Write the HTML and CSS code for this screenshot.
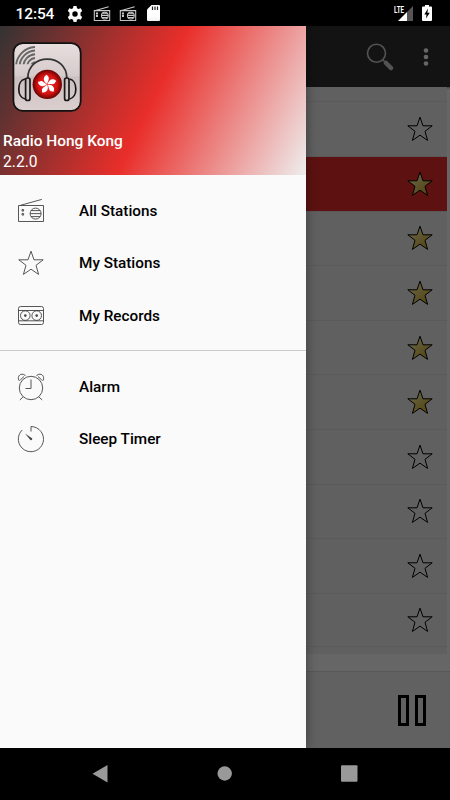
FILE: index.html
```html
<!DOCTYPE html>
<html lang="en">
<head>
    <meta charset="utf-8">
    <title>Radio Hong Kong</title>
    <meta name="viewport" content="width=device-width, initial-scale=1.0">
    <link rel="stylesheet" href="styles.css">
</head>
<body>
<!-- shared icons -->
<svg class="defs">
    <linearGradient id="gold" x1="0" y1="0" x2="1" y2="1"><stop offset=".25" stop-color="#fff0a0"/><stop offset=".75" stop-color="#d8b83c"/></linearGradient>
    <symbol id="star" viewBox="0 0 26 26">
        <path d="M13 1.2L16 9.8H25.2L18 15.3L20.6 24.4L13 19.2L5.4 24.4L8 15.3L.8 9.8H10Z"/>
    </symbol>
    <symbol id="radio" viewBox="0 0 28 26">
        <path d="M1.5 7.5H26.5V23.5H1.5ZM3.5 7.3L24.8 1.4"/>
        <circle cx="18.6" cy="15.6" r="5.5"/>
        <path d="M14 12.6H23.2M13.2 15.6H24M14 18.6H23.2"/>
        <path class="dots" d="M5 11.5h1.6v1.6H5zM5 15.5h1.6v1.6H5z"/>
    </symbol>
</svg>
<div class="phone">
    <div class="status">
        <span class="time">12:54</span>
        <svg class="gear" viewBox="0 0 16 16"><path d="M6.5 0h3l.5 2.3 1.4.8 2.3-.8 1.5 2.6-1.7 1.7v2.8l1.7 1.7-1.5 2.6-2.3-.8-1.4.8-.5 2.3h-3L6 13.7l-1.4-.8-2.3.8L.8 11.1l1.7-1.7V6.6L.8 4.9l1.5-2.6 2.3.8L6 2.3zM8 5.3a2.7 2.7 0 1 0 0 5.4 2.7 2.7 0 1 0 0-5.4z"/></svg>
        <svg class="s-radio"><use href="#radio"/></svg>
        <svg class="s-radio second"><use href="#radio"/></svg>
        <svg class="sd" viewBox="0 0 13 16"><path fill="#fff" d="M4.5 0H12a1 1 0 0 1 1 1v14a1 1 0 0 1-1 1H1a1 1 0 0 1-1-1V4.5z"/><path stroke="#222" stroke-width="1.2" d="M5.5 1.5v3.5M8 1.5v3.5M10.5 1.5v3.5"/></svg>
        <svg class="signal" viewBox="0 0 20 16"><path fill="#555" d="M19 1v15h-6V7z"/><path fill="#fff" d="M13 7v9H4z"/><text x="0" y="7.8" textLength="10" lengthAdjust="spacingAndGlyphs">LTE</text></svg>
        <svg class="battery" viewBox="0 0 10 16"><path fill="#fff" d="M3 0h4v1.5h2a1 1 0 0 1 1 1V15a1 1 0 0 1-1 1H1a1 1 0 0 1-1-1V2.5a1 1 0 0 1 1-1h2z"/><path d="M6 3.5L2.3 9.5h2.2L4 13.5 7.8 7.7H5.4z"/></svg>
    </div>
    <div class="app">
        <div class="bar">
            <svg class="search" viewBox="0 0 28 28"><circle cx="10.5" cy="10.3" r="9"/><path d="M16.5 16.5l3 3"/><path class="handle" d="M20 20l5 5"/></svg>
            <svg class="more" viewBox="0 0 6 20"><circle cx="3" cy="3.5" r="2.3"/><circle cx="3" cy="10" r="2.3"/><circle cx="3" cy="16.5" r="2.3"/></svg>
        </div>
        <div class="list">
            <div class="row"><svg class="star"><use href="#star"/></svg></div>
            <div class="row active"><svg class="star on"><use href="#star"/></svg></div>
            <div class="row"><svg class="star on"><use href="#star"/></svg></div>
            <div class="row"><svg class="star on"><use href="#star"/></svg></div>
            <div class="row"><svg class="star on"><use href="#star"/></svg></div>
            <div class="row"><svg class="star on"><use href="#star"/></svg></div>
            <div class="row"><svg class="star"><use href="#star"/></svg></div>
            <div class="row"><svg class="star"><use href="#star"/></svg></div>
            <div class="row"><svg class="star"><use href="#star"/></svg></div>
            <div class="row"><svg class="star"><use href="#star"/></svg></div>
        </div>
        <div class="player"><i class="pause"></i><i class="pause"></i></div>
        <div class="scrim"></div>
        <div class="drawer">
            <div class="head">
                <svg class="logo" viewBox="0 0 70 70">
                    <defs>
                        <linearGradient id="plate" x1="0" y1="0" x2="0" y2="1"><stop offset="0" stop-color="#e8dede"/><stop offset=".48" stop-color="#d6cbcb"/><stop offset=".5" stop-color="#cbbfbf"/><stop offset="1" stop-color="#dccfcf"/></linearGradient>
                        <radialGradient id="ball"><stop offset="0" stop-color="#f02d2d"/><stop offset=".65" stop-color="#d81111"/><stop offset="1" stop-color="#650404"/></radialGradient>
                        <clipPath id="corner"><path d="M0 0H23V22.3H0z"/></clipPath>
                    </defs>
                    <rect x="1.4" y="1.2" width="67.3" height="67.6" rx="9.5" fill="url(#plate)" stroke="#121212" stroke-width="1.8"/>
                    <g clip-path="url(#corner)" fill="none" stroke="#666" stroke-width="1.9">
                        <circle cx="24" cy="25" r="5"/><circle cx="24" cy="25" r="9"/><circle cx="24" cy="25" r="12.8"/><circle cx="24" cy="25" r="16.5"/><circle cx="24" cy="25" r="20"/>
                    </g>
                    <g fill="none" stroke="#181818" stroke-width="1.7">
                        <path stroke="#333" d="M15.8 36C16 24 24.5 17.2 35.3 17.2S54.6 24 54.8 36"/>
                        <rect x="13.6" y="36" width="4.4" height="22.5" rx="2"/>
                        <rect x="52.6" y="36" width="4.4" height="22.5" rx="2"/>
                        <path d="M13 37C4.7 38.5 4.7 55.5 13 57M57.6 37C65.9 38.5 65.9 55.5 57.6 57"/>
                    </g>
                    <circle cx="35.3" cy="42.4" r="14.7" fill="url(#ball)"/>
                    <g fill="#fff" transform="translate(35.3 42.4) rotate(-8)">
                        <path id="petal" d="M0-.5C-3.8-3-3.8-8.5 1-9.6C.8-8.500 3-7.500 2.300-5.500C1.800-3.800.8-3 0-.5z"/>
                        <use href="#petal" transform="rotate(72)"/><use href="#petal" transform="rotate(144)"/><use href="#petal" transform="rotate(216)"/><use href="#petal" transform="rotate(288)"/>
                    </g>
                </svg>
                <div class="name">Radio Hong Kong</div>
                <div class="version">2.2.0</div>
            </div>
            <div class="menu">
                <div class="item"><svg viewBox="0 0 28 26"><use href="#radio"/></svg>All Stations</div>
                <div class="item"><svg viewBox="0 0 28 26"><use href="#star" x="1" width="26" height="26"/></svg>My Stations</div>
                <div class="item">
                    <svg viewBox="0 0 28 26"><rect x="1.5" y="3.5" width="25" height="18" rx="2"/><path d="M1.5 7.5H26.5M1.5 17.8H26.5"/><circle cx="8.3" cy="12.6" r="4.8"/><circle cx="19.7" cy="12.6" r="4.8"/><circle class="dots" cx="8.3" cy="12.6" r="1.3"/><circle class="dots" cx="19.7" cy="12.6" r="1.3"/></svg>My Records</div>
            </div>
            <div class="menu tools">
                <div class="item">
                    <svg viewBox="0 0 28 28"><circle cx="14" cy="15" r="11.7"/><path d="M14 6.5V15.5H8.5M6 24L2.8 27M22 24L25.2 27"/><path d="M2.5 8C.2 5.5 1.5 1.3 5 1.2C7 1.2 8 2 8.5 3M3.2 7L7 3.5M25.5 8C27.8 5.5 26.5 1.3 23 1.2C21 1.2 20 2 19.5 3M24.8 7L21 3.5"/></svg>Alarm</div>
                <div class="item">
                    <svg viewBox="0 0 28 28"><path d="M14 6.5V1.5A12.6 12.6 0 1 1 5.2 5"/><path class="dots" d="M8 8.5L15.3 13.5Q15.5 15.5 13.6 15.3z"/></svg>Sleep Timer</div>
            </div>
        </div>
    </div>
    <div class="nav">
        <svg viewBox="0 0 20 20"><path d="M1.500 9.700L16.500 1V18.500z"/></svg>
        <svg viewBox="0 0 20 20"><circle cx="9.7" cy="9.5" r="7.2"/></svg>
        <svg viewBox="0 0 20 20"><rect x="2" y="1.3" width="16.5" height="16.5" rx="1"/></svg>
    </div>
</div>
</body>
</html>
```
FILE: styles.css
```css
* {
    padding: 0;
    margin: 0;
    box-sizing: border-box;
}
body {
    font-family: Roboto, "Liberation Sans", sans-serif;
    background: #000;
}
svg {display: block;flex: none;}
.defs {position: absolute;width: 0;height: 0;}
.phone {
    width: 450px;
    height: 800px;
    display: flex;
    flex-direction: column;
    overflow: hidden;
}

/* status bar */
.status {
    height: 26px;
    padding: 1px 18px 0 15.5px;
    display: flex;
    align-items: center;
    background: #000;
    color: #fff;
}
.time {font-size: 15.5px;font-weight: 500;width: 51.5px;letter-spacing: -.1px;padding-top: 1px;}
.gear {width: 16px;height: 16px;fill: #fff;}
.s-radio {width: 18px;height: 16px;margin-left: 10px;fill: none;stroke: #ccc;stroke-width: 1.7;}
.s-radio .dots {fill: #fff;}
.second {margin-left: 8px;}
.sd {width: 13px;height: 16px;margin-left: 10px;margin-top: -1px;}
.signal {width: 20px;height: 16px;margin-left: auto;margin-top: -1px;}
.signal text {fill: #fff;font-size: 9px;font-weight: 700;}
.battery {width: 10px;height: 16px;margin-left: 8px;margin-top: -1px;}

/* main screen */
.app {
    position: relative;
    height: 722px;
    display: flex;
    flex-direction: column;
    background: #fff;
}
.bar {
    height: 61px;
    background: #303030;
    display: flex;
    align-items: center;
    justify-content: flex-end;
    padding-right: 21px;
    box-shadow: 0 1px 2px rgba(0,0,0,.5);
}
.search {width: 28px;height: 28px;margin-right: 29px;fill: none;stroke: #d0d0d0;stroke-width: 1.6;}
.search .handle {stroke-width: 4.5;stroke-linecap: round;}
.more {width: 6px;height: 20px;fill: #fff;}
.list {
    width: 447px;
    height: 567px;
    padding-top: 14.4px;
    background: #f1f1f1;
}
.row {
    height: 54.6px;
    border-top: 1px solid #e0e0e0;
    padding-right: 14px;
    display: flex;
    align-items: center;
    justify-content: flex-end;
}
.row:last-child {border-bottom: 1px solid #e0e0e0;}
.active {background: #e92f2c;}
.star {width: 26px;height: 26px;fill: none;stroke: #000;stroke-width: 1;}
.on {fill: url(#gold);}
.player {
    height: 77px;
    margin-top: 17px;
    padding: 23px 24px 0 0;
    display: flex;
    justify-content: flex-end;
    gap: 6px;
    background: #f3f3f3;
    border-top: 1px solid #dcdcdc;
}
.pause {width: 11px;height: 31px;border: 3px solid #000;}
.scrim {position: absolute;top: 0;left: 0;width: 100%;height: 100%;background: rgba(0,0,0,.6);}

/* drawer */
.drawer {
    position: absolute;
    top: 0;
    left: 0;
    width: 306px;
    height: 722px;
    background: #fafafa;
    box-shadow: 1px 0 10px rgba(0,0,0,.35);
}
.head {
    height: 149px;
    padding: 16px 3px 0;
    color: #fff;
    background: linear-gradient(116deg, #333 0%, #e92e2a 50%, #eee 100%);
}
.logo {width: 70px;height: 70px;margin-left: 9px;}
.name {margin-top: 18px;font-size: 15.45px;line-height: 22px;font-weight: 500;}
.version {font-size: 15.6px;line-height: 20px;}
.menu {padding-top: 9.6px;height: 175px;}
.item {
    height: 52.5px;
    padding-left: 16.5px;
    display: flex;
    align-items: center;
    font-size: 15.3px;
    font-weight: 500;
    color: #000;
}
.item svg {
    width: 28px;
    height: 28px;
    margin-right: 34.5px;
    fill: none;
    stroke: #444;
    stroke-width: .9;
}
.item .dots {fill: #444;stroke: none;}
.tools {border-top: 1px solid #ccc;}

/* navigation */
.nav {
    height: 52px;
    padding: 0 91px;
    display: flex;
    align-items: center;
    justify-content: space-between;
    background: #000;
}
.nav svg {width: 20px;height: 20px;fill: #999;}
```
